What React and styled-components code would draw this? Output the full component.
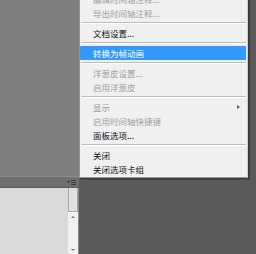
import React from "react"
import styled, { createGlobalStyle } from "styled-components"

const GlobalStyle = createGlobalStyle`
  html, body {
    margin: 0;
    padding: 0;
    background: #5a5a5a;
  }
  body {
    font-family: "Noto Sans CJK SC", "Noto Sans", sans-serif;
  }
`

const Page = styled.div`
  position: relative;
  display: flex;
  width: 256px;
  height: 254px;
  overflow: hidden;
  background: #5a5a5a;
`

const LeftColumn = styled.div`
  display: flex;
  flex-direction: column;
  width: 79px;
  flex: 0 0 79px;
`

const TopArea = styled.div`
  flex: 0 0 176px;
  background: #7f7f7f;
`

const PanelHeader = styled.div`
  display: flex;
  align-items: center;
  justify-content: flex-end;
  flex: 0 0 10px;
  padding-right: 3px;
  background: #6f6f6f;
  border-top: 1px solid #8c8c8c;
  border-bottom: 1px solid #5e5e5e;
`

const PanelBody = styled.div`
  display: flex;
  flex: 1;
`

const Content = styled.div`
  flex: 1;
  background: #dadada;
`

const Scrollbar = styled.div`
  display: flex;
  flex-direction: column;
  width: 10px;
  background: #ececec;
  border-right: 1px solid #8a8a8a;
`

const Thumb = styled.div`
  flex: 0 0 24px;
  background: #e2e2e2;
  border: 1px solid #a8a8a8;
  border-top: none;
  box-sizing: border-box;
`

const Track = styled.div`
  display: flex;
  flex-direction: column;
  align-items: center;
  justify-content: space-between;
  flex: 1;
  padding: 4px 0 3px;
  background: #f1f1f1;
`

const Arrow = styled.div`
  width: 0;
  height: 0;
  border-left: 2px solid transparent;
  border-right: 2px solid transparent;
  ${({ $down }) =>
    $down ? "border-top: 2px solid #777;" : "border-bottom: 2px solid #777;"}
`

const RightArea = styled.div`
  flex: 1;
  background: #5a5a5a;
`

const Menu = styled.div`
  position: absolute;
  left: 79px;
  top: -10px;
  width: 169px;
  box-sizing: border-box;
  padding: 1px 1px 1px 0;
  background: #f0f0f0;
  border: 1px solid #979797;
  border-right-color: #cfcfcf;
  box-shadow: 1px 1px 0 #3a3a3a, 2px 2px 0 rgba(0, 0, 0, 0.25);
`

const Item = styled.div`
  display: flex;
  align-items: center;
  justify-content: space-between;
  height: 14px;
  padding: 0 6px 0 13px;
  font-size: 8.5px;
  line-height: 14px;
  white-space: nowrap;
  color: ${({ $disabled, $active }) =>
    $active ? "#ffffff" : $disabled ? "#9e9e9e" : "#111111"};
  background: ${({ $active }) => ($active ? "#3399ff" : "transparent")};
`

const Separator = styled.div`
  height: 1px;
  margin: 2px 0 2px 1px;
  background: #bcbcbc;
  border-bottom: 1px solid #ffffff;
`

const SubArrow = styled.span`
  width: 0;
  height: 0;
  border-top: 2.5px solid transparent;
  border-bottom: 2.5px solid transparent;
  border-left: 3px solid #5a5a5a;
`

const FlyoutIcon = () => (
  <svg width="9" height="6" viewBox="0 0 9 6">
    <path d="M0 2 L3 2 L1.5 4 Z" fill="#2a2a2a" />
    <rect x="4" y="1" width="5" height="1" fill="#3a3a3a" />
    <rect x="4" y="3" width="5" height="1" fill="#3a3a3a" />
    <rect x="4" y="5" width="5" height="1" fill="#3a3a3a" />
  </svg>
)

const menuGroups = [
  [
    { label: "编辑时间轴注释...", disabled: true },
    { label: "导出时间轴注释...", disabled: true },
  ],
  [{ label: "文档设置..." }],
  [{ label: "转换为帧动画", active: true }],
  [
    { label: "洋葱皮设置...", disabled: true },
    { label: "启用洋葱皮", disabled: true },
  ],
  [
    { label: "显示", disabled: true, sub: true },
    { label: "启用时间轴快捷键", disabled: true },
    { label: "面板选项..." },
  ],
  [{ label: "关闭" }, { label: "关闭选项卡组" }],
]

export default function App() {
  return (
    <>
      <GlobalStyle />
      <Page>
        <LeftColumn>
          <TopArea />
          <PanelHeader>
            <FlyoutIcon />
          </PanelHeader>
          <PanelBody>
            <Content />
            <Scrollbar>
              <Thumb />
              <Track>
                <Arrow />
                <Arrow $down />
              </Track>
            </Scrollbar>
          </PanelBody>
        </LeftColumn>
        <RightArea />
        <Menu>
          {menuGroups.map((group, gi) => (
            <React.Fragment key={gi}>
              {gi > 0 && <Separator />}
              {group.map(item => (
                <Item
                  key={item.label}
                  $disabled={item.disabled}
                  $active={item.active}
                >
                  <span>{item.label}</span>
                  {item.sub && <SubArrow />}
                </Item>
              ))}
            </React.Fragment>
          ))}
        </Menu>
      </Page>
    </>
  )
}
